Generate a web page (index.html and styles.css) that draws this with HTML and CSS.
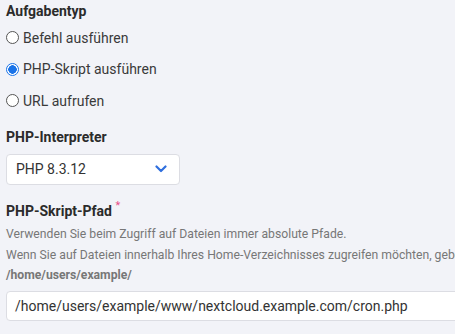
FILE: index.html
```html
<!DOCTYPE html>
<html lang="de">
<head>
  <meta charset="UTF-8" />
  <title>Cronjob bearbeiten</title>
  <link rel="stylesheet" href="styles.css">
</head>
<body>
  <div class="form">
    <div class="field">
      <div class="label first">Aufgabentyp</div>
      <label class="radio"><span class="dot"></span>Befehl ausführen</label>
      <label class="radio"><span class="dot on"></span>PHP-Skript ausführen</label>
      <label class="radio"><span class="dot"></span>URL aufrufen</label>
    </div>

    <div class="field wide">
      <div class="label">PHP-Interpreter</div>
      <div class="select">
        <span>PHP 8.3.12</span>
        <svg width="12" height="8" viewBox="0 0 12 8"><path d="M1.5 1.5 L6 6 L10.5 1.5" fill="none" stroke="#2f6fde" stroke-width="2.2" stroke-linecap="round" stroke-linejoin="round"/></svg>
      </div>
    </div>

    <div class="field">
      <div class="label">PHP-Skript-Pfad <sup class="req">*</sup></div>
      <div class="help first">Verwenden Sie beim Zugriff auf Dateien immer absolute Pfade.</div>
      <div class="help">Wenn Sie auf Dateien innerhalb Ihres Home-Verzeichnisses zugreifen möchten, geben Sie den Pfad so an:</div>
      <div class="help strong">/home/users/example/</div>
      <div class="input">/home/users/example/www/nextcloud.example.com/cron.php</div>
    </div>
  </div>
</body>
</html>
```

FILE: styles.css
```css
body {
  margin: 0;
  background: #f2f3f8;
  font-family: Roboto, "Liberation Sans", sans-serif;
  color: #333;
  overflow: hidden;
}
.form {
  padding: 3px 0 0 6px;
  width: 600px;
}
.field {
  margin-bottom: 12px;
}
.field.wide {
  margin-bottom: 13px;
}
.label {
  font-size: 14px;
  font-weight: bold;
  line-height: 17px;
  color: #2b2b2b;
  margin-bottom: 3px;
}
.label.first {
  margin-bottom: 2px;
}
.req {
  color: #e8508a;
  font-size: 11px;
  font-weight: normal;
  position: relative;
  top: -1px;
}
.radio {
  display: flex;
  align-items: center;
  gap: 4px;
  height: 31.5px;
  font-size: 14px;
  color: #3a3a3a;
}
.dot {
  width: 11px;
  height: 11px;
  border: 1px solid #555;
  border-radius: 50%;
  background: #fff;
  box-sizing: content-box;
}
.dot.on {
  border-color: #1a73e8;
  background: radial-gradient(circle, #1a73e8 0 4px, #fff 4.5px);
}
.select {
  margin-top: 8px;
  width: 151px;
  height: 29px;
  background: #fff;
  border: 1px solid #dcdde3;
  border-radius: 4px;
  display: flex;
  align-items: center;
  justify-content: space-between;
  padding: 0 12px 0 9px;
  font-size: 14px;
  color: #333;
}
.help {
  font-size: 12.2px;
  color: #777;
  line-height: 20.5px;
  white-space: nowrap;
}
.help.first {
  margin-top: 5px;
}
.help.strong {
  font-weight: bold;
}
.input {
  margin-top: 5px;
  height: 28px;
  background: #fff;
  border: 1px solid #dcdde3;
  border-radius: 4px;
  display: flex;
  align-items: center;
  padding-left: 8px;
  font-size: 14px;
  color: #333;
}
```
